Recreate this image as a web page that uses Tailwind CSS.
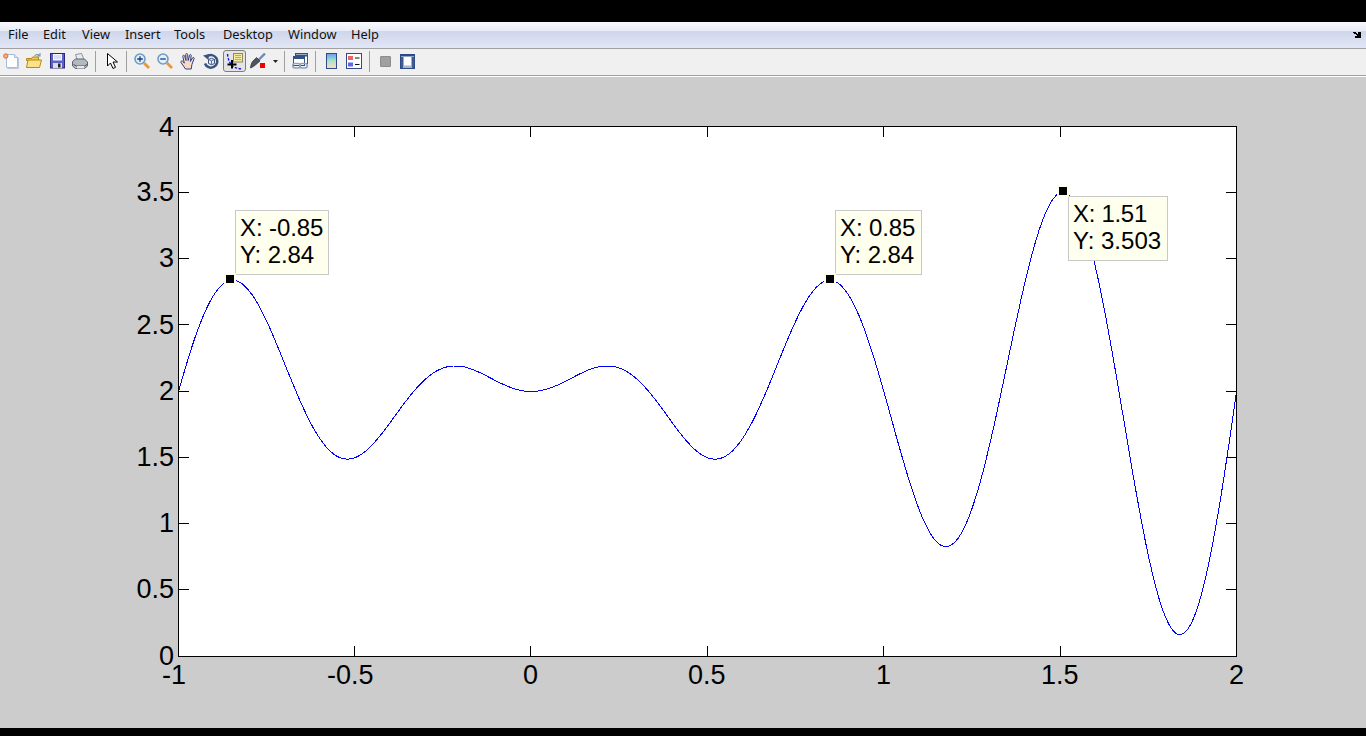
<!DOCTYPE html>
<html>
<head>
<meta charset="utf-8">
<script src="https://cdn.jsdelivr.net/npm/@tailwindcss/browser@4"></script>
<title>Figure</title>
</head>
<body class="m-0 overflow-hidden bg-black">
<div class="flex flex-col w-[1366px] h-[736px] overflow-hidden font-['Liberation_Sans',Arial,sans-serif]">
  <div class="h-[22px] bg-black shrink-0"></div>

  <!-- menu bar -->
  <div class="h-[27px] shrink-0 flex flex-col border-b border-[#a0a0a0] relative">
    <div class="h-[9px] bg-gradient-to-b from-[#f8f9fd] to-[#e9ecf7]"></div>
    <div class="h-[17px] bg-gradient-to-b from-[#cfd6eb] to-[#e2e7f6]"></div>
    <nav class="absolute inset-0 flex items-center pl-2 pb-px text-[12.8px] leading-none text-[#111] font-['Noto_Sans',sans-serif]">
      <span class="w-[35px]">File</span>
      <span class="w-[39px]">Edit</span>
      <span class="w-[43px]">View</span>
      <span class="w-[49px]">Insert</span>
      <span class="w-[49px]">Tools</span>
      <span class="w-[65px]">Desktop</span>
      <span class="w-[63px]">Window</span>
      <span>Help</span>
    </nav>
    <svg class="absolute left-[1353px] top-[9px]" width="9" height="8" viewBox="0 0 9 8"><path d="M0 1h3v1h1v1h1V1h3v6H2V5h2V4H3V3H1V2H0z" fill="#000"/></svg>
  </div>

  <!-- toolbar -->
  <div class="h-[27px] shrink-0 flex items-center bg-[#f0f0f0] border-b border-[#a0a0a0] pb-[2px]">
    <div class="w-[23px] pl-[3px]"><svg class="block" width="16" height="16" viewBox="0 0 16 16"><path d="M3.500 1.500h8l3 3v10h-11z" fill="#fff" stroke="#a4bce4"/><path d="M11.500 1.500v3h3" fill="#dbe6f8" stroke="#a4bce4"/><path d="M4.500 15.500h11v-11" fill="none" stroke="#bcc8e0"/><circle cx="2.800" cy="3" r="2.200" fill="#f9b27a" stroke="#e4683e"/></svg></div>
    <div class="w-[23px] pl-[3px]"><svg class="block" width="16" height="16" viewBox="0 0 16 16"><path d="M.5 5.500h5l1-1.500h6v3.500H.5z" fill="#eec94f" stroke="#b48a10"/><path d="M.5 14.500l1.500-7.500h13.500l-2 7.500z" fill="#fde28a" stroke="#b48a10"/><path d="M8.500 3c1.500-2 3.500-2 5-.5M14 0v3h-3" fill="none" stroke="#7c93b8" stroke-width="1.100"/></svg></div>
    <div class="w-[23px] pl-[3px]"><svg class="block" width="16" height="16" viewBox="0 0 16 16"><rect x="1.500" y=".5" width="14" height="14.500" fill="#5b62c8" stroke="#262a78"/><rect x="4" y="1" width="9" height="6.500" fill="#f5f6fc"/><path d="M5 3h7M5 5h7" stroke="#c2c6e6"/><rect x="4" y="10" width="9" height="5" fill="#dcdce4"/><rect x="9" y="10.500" width="2.500" height="4" fill="#20202c"/></svg></div>
    <div class="w-[23px] pl-[3px]"><svg class="block" width="16" height="16" viewBox="0 0 16 16"><path d="M3.500 1.500l6-1 2.500 6h-7z" fill="#e6ebf0" stroke="#8a96a4"/><path d="M.5 8.500l3-2.500h9l3 3v4l-3 2.500h-9l-3-2.500z" fill="#b4b9c0" stroke="#5f646c"/><path d="M1.500 11.500l3 1.500h8l2.500-1.500" fill="none" stroke="#4d5158"/><rect x="5" y="13" width="7" height="2.500" fill="#e8e8e8"/></svg></div>
    <div class="w-[9px] flex"><div class="ml-[3px] w-px h-[21px] bg-[#a0a0a0]"></div></div>

    <div class="w-[23px] pl-[6px]"><svg class="block" width="11" height="16" viewBox="0 0 11 16"><path d="M.5.500v12.500l3-3 2.500 5.500 2.500-1.200-2.500-5.300h4.500z" fill="#fff" stroke="#000"/></svg></div>
    <div class="w-[7px] flex"><div class="ml-[2px] w-px h-[21px] bg-[#a0a0a0]"></div></div>

    <div class="w-[23px] pl-[3px]"><svg class="block" width="16" height="16" viewBox="0 0 16 16"><path d="M10 10l5 5" stroke="#e8983a" stroke-width="2.800"/><circle cx="6" cy="6" r="5" fill="#dff0f9" stroke="#6f9cc4" stroke-width="1.600"/><path d="M3.200 6h5.600M6 3.200v5.600" stroke="#1f3a7c" stroke-width="1.300"/></svg></div>
    <div class="w-[23px] pl-[3px]"><svg class="block" width="16" height="16" viewBox="0 0 16 16"><path d="M10 10l5 5" stroke="#e8983a" stroke-width="2.800"/><circle cx="6" cy="6" r="5" fill="#dff0f9" stroke="#6f9cc4" stroke-width="1.600"/><path d="M3.200 6h5.600" stroke="#1f3a7c" stroke-width="1.300"/></svg></div>
    <div class="w-[23px] pl-[3px]"><svg class="block" width="17" height="17" viewBox="0 0 17 17"><path d="M5.500 16L1 9.500c-.8-1.300 1-2.200 1.900-1l1.400 1.700L2.800 3.500c-.3-1.400 1.500-1.700 1.900-.4l1.300 4.400L5.700 1.500c0-1.300 1.800-1.300 1.900 0l.6 6L9.500 2.300c.3-1.200 1.900-.9 1.700.3l-.8 5.800 2.100-3.500c.7-1 2-.4 1.600.7l-2.200 6-.7 4.400z" fill="#f9d9bf" stroke="#2c4088" stroke-width="1"/></svg></div>
    <div class="w-[23px] pl-[3px]"><svg class="block" width="16" height="16" viewBox="0 0 16 16"><path d="M4 3.400A6.300 6.300 0 1 1 2 10.500" fill="none" stroke="#3c5280" stroke-width="2.500"/><path d="M0 2.500l6-1.500-.5 6z" fill="#3c5280"/><path d="M5.500 6.500l3-1.200 3 1.200v4l-3 1.200-3-1.200z" fill="#eef1f6" stroke="#3c5280"/><path d="M8.500 7.800v3.700M5.500 6.500l3 1.300 3-1.300" stroke="#3c5280" fill="none" stroke-width=".8"/></svg></div>
    <div class="w-[23px] h-[22px] flex justify-center items-center rounded-[3px] border border-[#7d7d7d] bg-[#e4e4e4]"><svg class="block" width="18" height="18" viewBox="0 0 18 18"><path d="M1.500 2c.5 5 2 9 5 12 2 1.500 5 2.500 9.500 3" fill="none" stroke="#1010f0" stroke-width="1.400" stroke-dasharray="2.500 1.500"/><rect x="7.500" y="1.500" width="9" height="8.500" fill="#f6e89c" stroke="#8c8a60"/><path d="M9 3.500h6M9 5.500h6M9 7.500h6" stroke="#b3a45c" stroke-width=".9"/><path d="M6 8v8.500M1.500 12.500h9" stroke="#000" stroke-width="2"/></svg></div>
    <div class="w-[22px] pl-[4px]"><svg class="block" width="16" height="16" viewBox="0 0 16 16"><path d="M8.500 7L15 .5" stroke="#6b8ac0" stroke-width="2.400"/><path d="M3 8l3.500-3.500 3.500 3.500-4 3.500c-2 1.700-3.500 2.700-5.500 3.500.2-2.500.8-5 2.500-7z" fill="#50545c" stroke="#2a2c30" stroke-width=".7"/><rect x="10" y="10" width="5" height="5" fill="#f00000"/></svg></div>
    <div class="w-[14px] flex justify-center"><svg class="block" width="5" height="3" viewBox="0 0 5 3"><path d="M0 0h5L2.500 3z" fill="#222"/></svg></div>
    <div class="w-[6px] flex"><div class="ml-[2px] w-px h-[21px] bg-[#a0a0a0]"></div></div>

    <div class="w-[22px] pl-[4px]"><svg class="block" width="16" height="16" viewBox="0 0 16 16"><rect x="3.500" y=".5" width="12" height="10" fill="#fff" stroke="#33508a"/><path d="M3.500 2.500h12" stroke="#33508a" stroke-width="2"/><rect x="1.500" y="3.500" width="11" height="9" fill="#fff" stroke="#33508a"/><path d="M1.500 5h11" stroke="#33508a" stroke-width="2"/><rect x=".8" y="10.500" width="7.500" height="4.500" rx="2.200" fill="none" stroke="#8da2bf" stroke-width="1.600"/><rect x="7.800" y="10.500" width="7.500" height="4.500" rx="2.200" fill="none" stroke="#8da2bf" stroke-width="1.600"/></svg></div>
    <div class="w-[10px] flex"><div class="ml-[5px] w-px h-[21px] bg-[#a0a0a0]"></div></div>

    <div class="w-[23px] pl-[6px]"><div class="w-[11px] h-[16px] border border-[#2f4a86] bg-gradient-to-b from-[#6f9fe8] via-[#a8e4c8] to-[#fbd9c0]"></div></div>
    <div class="w-[23px] pl-[3px]"><svg class="block" width="16" height="16" viewBox="0 0 16 16"><rect x=".5" y=".5" width="15" height="15" fill="#fff" stroke="#2f4a86"/><path d="M15.500 1v15" stroke="#2f4a86"/><rect x="2" y="3" width="5" height="4" fill="#ee6464"/><rect x="2" y="9.500" width="5" height="4" fill="#6464ee"/><path d="M9 5h4.500M9 11.500h4.500" stroke="#111" stroke-width="1.200"/></svg></div>
    <div class="w-[8px] flex"><div class="ml-[3px] w-px h-[21px] bg-[#a0a0a0]"></div></div>

    <div class="w-[23px] pl-[6px]"><div class="w-[11px] h-[11px] bg-[#a0a0a0] border border-[#8c8c8c] rounded-[1px]"></div></div>
    <div class="w-[23px] pl-[3px]"><svg class="block" width="15" height="15" viewBox="0 0 15 15"><rect x=".5" y=".5" width="14" height="14" fill="#fff" stroke="#2f4a86"/><path d="M1 1.500h13" stroke="#2f4a86" stroke-width="2"/><rect x="1" y="3" width="2.500" height="11" fill="#3f5c92"/><rect x="11.500" y="3" width="2.500" height="11" fill="#3f5c92"/><rect x="3.500" y="11.500" width="8" height="2.500" fill="#a8b8d0"/></svg></div>
  </div>
  <div class="h-px shrink-0 bg-white"></div>

  <!-- figure area -->
  <main class="flex-1 bg-[#cccccc] pl-[178px] pt-[49px] text-[27px] leading-none text-black">
    <div class="relative w-[1059px] h-[531px] bg-white">
      <svg id="axes" class="absolute inset-0" width="1059" height="531" viewBox="0 0 1059 531">
        <polyline id="curve" fill="none" stroke="#0000ff" stroke-width="1" shape-rendering="crispEdges"/>
        <g stroke="#000" stroke-width="1" shape-rendering="crispEdges">
          <path d="M.5.5H1058.500V530.500H.5Z" fill="none"/>
          <path d="M176.500 530V520M176.500 1V11M352.500 530V520M352.500 1V11M529.500 530V520M529.500 1V11M705.500 530V520M705.500 1V11M882.500 530V520M882.500 1V11"/>
          <path d="M1 66.500H11M1058 66.500H1048M1 132.500H11M1058 132.500H1048M1 198.500H11M1058 198.500H1048M1 265.500H11M1058 265.500H1048M1 331.500H11M1058 331.500H1048M1 397.500H11M1058 397.500H1048M1 463.500H11M1058 463.500H1048"/>
        </g>
      </svg>

      <!-- y tick labels -->
      <span class="absolute right-[1063px] top-[-12px]">4</span>
      <span class="absolute right-[1063px] top-[53px]">3.5</span>
      <span class="absolute right-[1063px] top-[119px]">3</span>
      <span class="absolute right-[1063px] top-[186px]">2.5</span>
      <span class="absolute right-[1063px] top-[252px]">2</span>
      <span class="absolute right-[1063px] top-[318px]">1.5</span>
      <span class="absolute right-[1063px] top-[384px]">1</span>
      <span class="absolute right-[1063px] top-[450px]">0.5</span>
      <span class="absolute right-[1063px] top-[517px]">0</span>

      <!-- x tick labels -->
      <span class="absolute left-[-16px] top-[536px]">-1</span>
      <span class="absolute left-[149px] top-[536px]">-0.5</span>
      <span class="absolute left-[345px] top-[536px]">0</span>
      <span class="absolute left-[510px] top-[536px]">0.5</span>
      <span class="absolute left-[698px] top-[536px]">1</span>
      <span class="absolute left-[863px] top-[536px]">1.5</span>
      <span class="absolute left-[1051px] top-[536px]">2</span>

      <!-- data tips -->
      <div class="absolute left-[57px] top-[84px] w-[94px] h-[65px] border border-[#c8c8c8] bg-[#ffffee] pl-[4px] pt-[3px] text-[24px] leading-[27px] tracking-[-0.1px]"><div>X: -0.85</div><div>Y: 2.84</div></div>
      <div class="absolute left-[657px] top-[84px] w-[87px] h-[65px] border border-[#c8c8c8] bg-[#ffffee] pl-[4px] pt-[3px] text-[24px] leading-[27px] tracking-[-0.1px]"><div>X: 0.85</div><div>Y: 2.84</div></div>
      <div class="absolute left-[890px] top-[70px] w-[100px] h-[65px] border border-[#c8c8c8] bg-[#ffffee] pl-[4px] pt-[3px] text-[24px] leading-[27px]"><div class="tracking-[-0.3px]">X: 1.51</div><div>Y: 3.503</div></div>

      <div class="absolute left-[46px] top-[147px] w-3 h-3 border-2 border-[#ffffee] bg-black"></div>
      <div class="absolute left-[646px] top-[147px] w-3 h-3 border-2 border-[#ffffee] bg-black"></div>
      <div class="absolute left-[879px] top-[59px] w-3 h-3 border-2 border-[#ffffee] bg-black"></div>
    </div>
  </main>

  <div class="h-2 shrink-0 bg-black"></div>
</div>
<script>
  var pts = [];
  for (var i = 0; i <= 300; i++) {
    var x = -1 + i * 0.01;
    var y = x * Math.sin(3 * Math.PI * x) + 2;
    pts.push(((x + 1) * 352.67 + 0.5).toFixed(1) + ',' + (530.5 - y * 132.5).toFixed(1));
  }
  document.getElementById('curve').setAttribute('points', pts.join(' '));
</script>
</body>
</html>
